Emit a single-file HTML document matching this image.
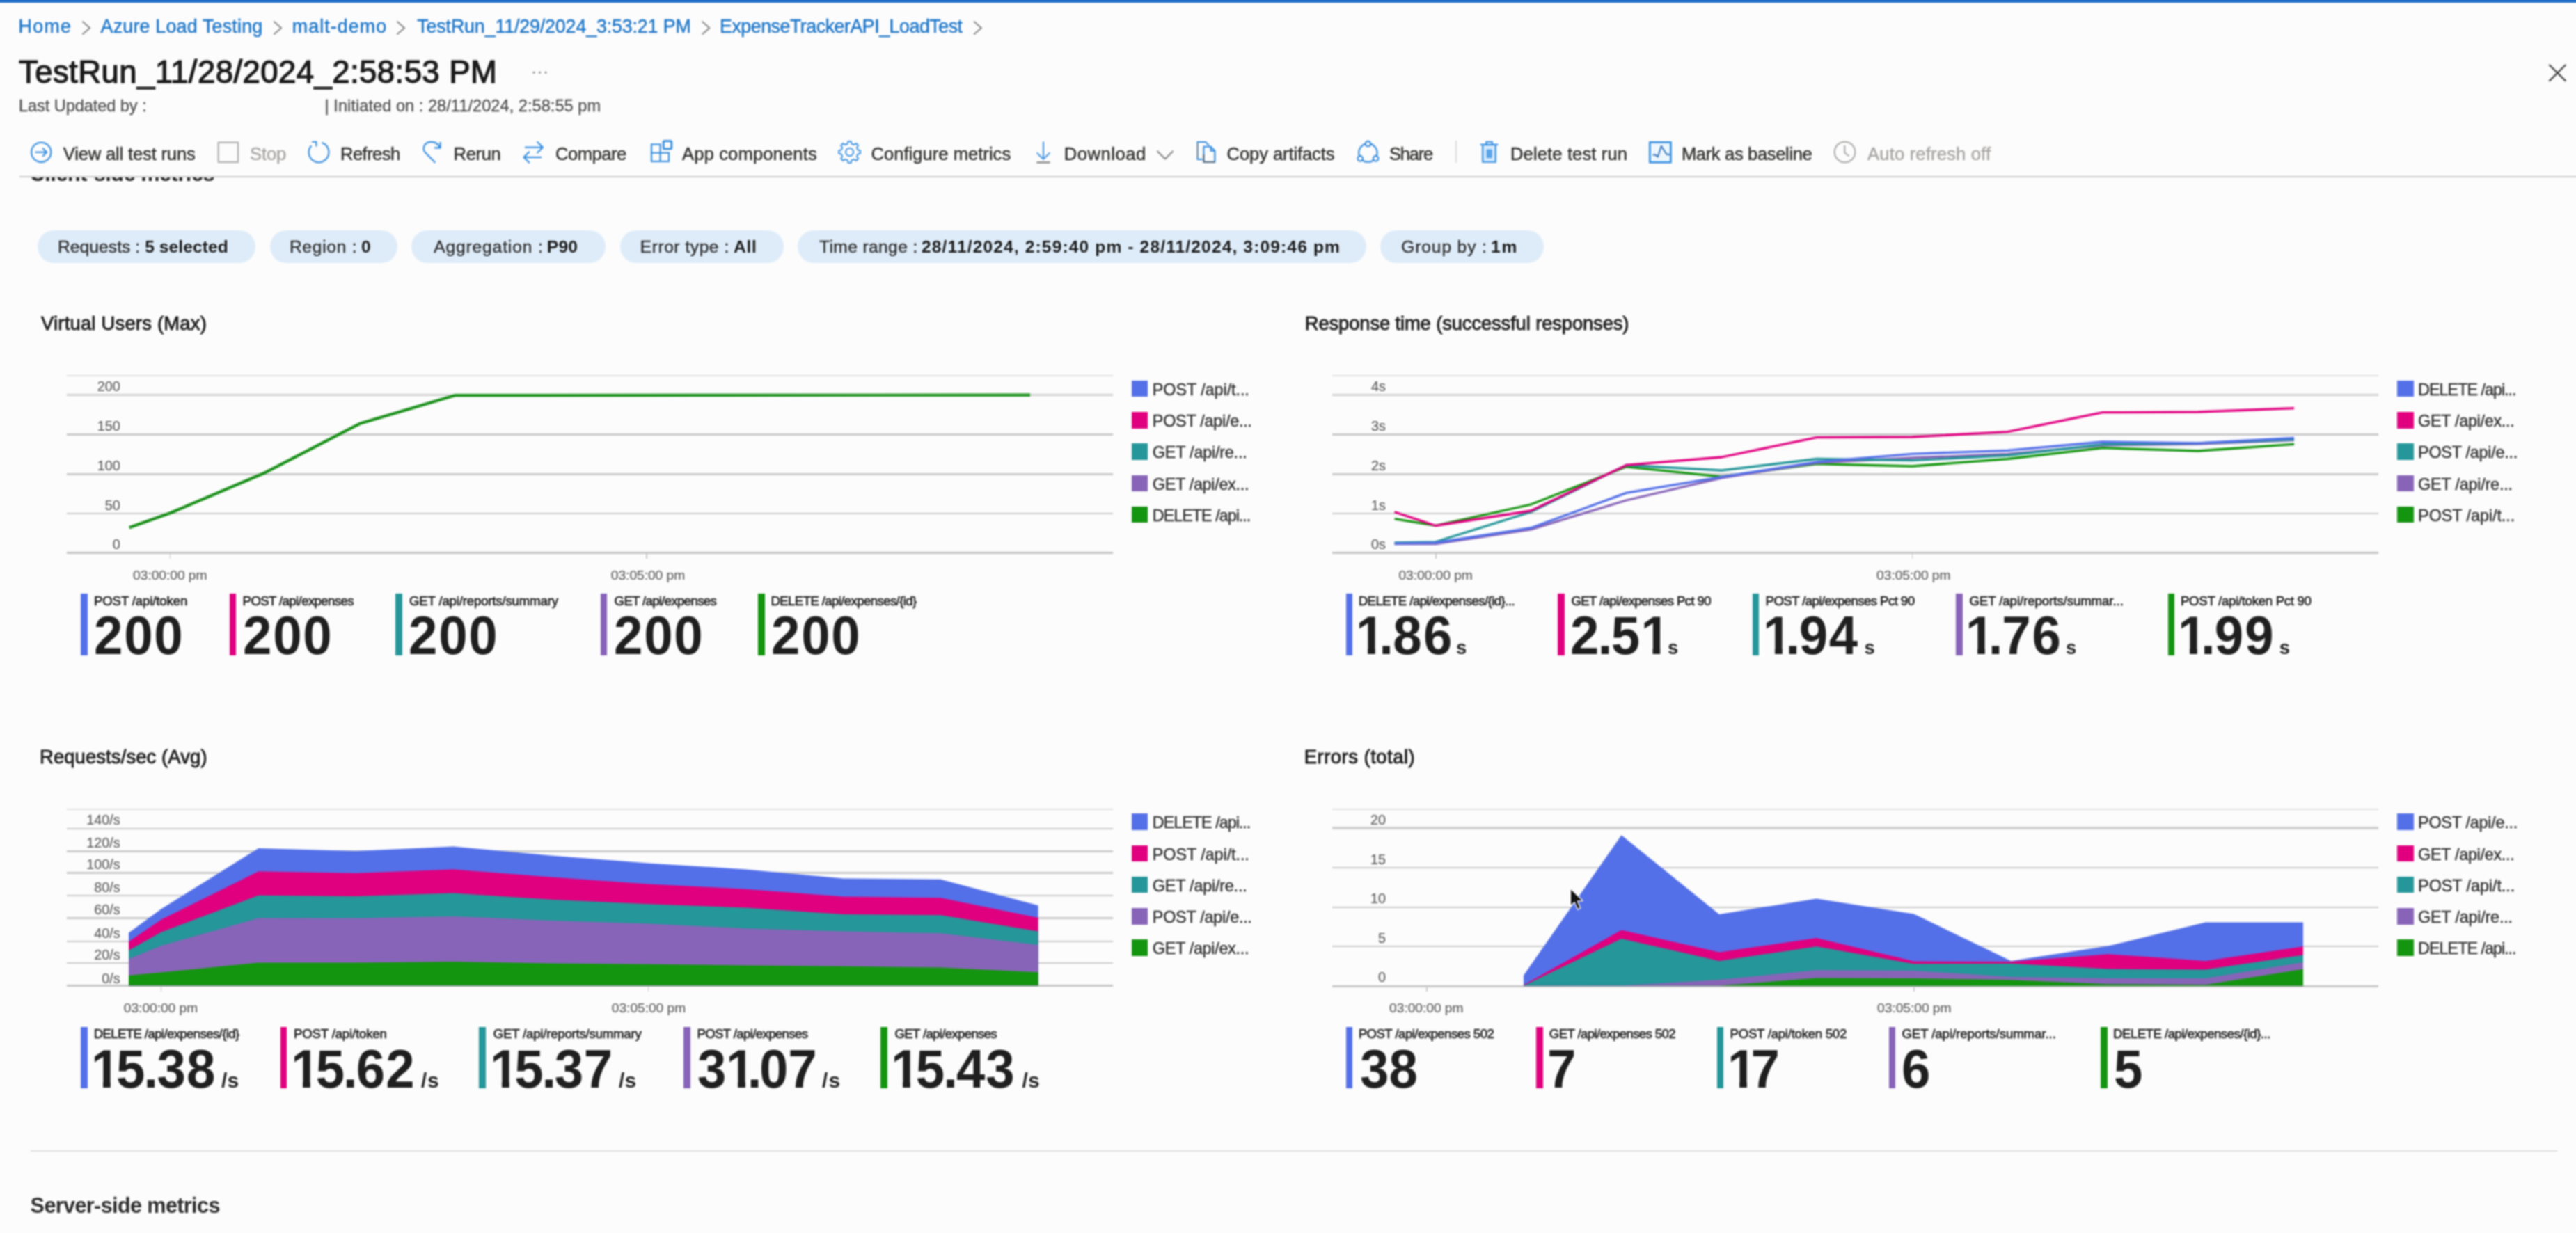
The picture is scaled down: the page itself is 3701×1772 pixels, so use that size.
<!DOCTYPE html><html><head><meta charset="utf-8"><title>TestRun - Azure Load Testing</title><style>

html,body{margin:0;padding:0;}
html{overflow:hidden;background:#fcfcfc;}
body{width:3701px;height:1772px;background:#fcfcfc;overflow:hidden;position:relative;font-family:"Liberation Sans",sans-serif;}
.r{position:absolute;}
.t{position:absolute;white-space:pre;line-height:1;font-family:"Liberation Sans",sans-serif;}
.t i{font-style:normal;}
.o{display:inline-block;margin-right:-0.1em;clip-path:polygon(0 0,100% 0,100% 0.715em,0.374em 0.715em,0.374em 100%,0.23em 100%,0.23em 0.715em,0 0.715em);}
.o.p{margin-right:-0.09em;}
svg.g{position:absolute;left:0;top:0;}
#c{position:absolute;left:0;top:0;width:3701px;height:1772px;overflow:hidden;}
#w{position:absolute;left:0;top:0;width:3701px;height:1772px;filter:blur(0.85px);}

</style></head><body>
<div id="c"><div id="w">
<div class="r" style="left:-10.0px;top:-8.0px;width:3721.0px;height:11.7px;background:#1a6cc6;"></div>
<div class="r" style="left:28.0px;top:252.9px;width:3701.0px;height:2.4px;background:#cccccc;"></div>
<div class="r" style="left:2091.0px;top:202.0px;width:1.6px;height:32.0px;background:#dcdcdc;"></div>
<div class="r" style="left:53.6px;top:331.4px;width:313.2px;height:46.5px;background:#deecf9;border-radius:23.3px"></div>
<div class="r" style="left:387.5px;top:331.4px;width:183.9px;height:46.5px;background:#deecf9;border-radius:23.3px"></div>
<div class="r" style="left:591.0px;top:331.4px;width:279.0px;height:46.5px;background:#deecf9;border-radius:23.3px"></div>
<div class="r" style="left:890.7px;top:331.4px;width:235.0px;height:46.5px;background:#deecf9;border-radius:23.3px"></div>
<div class="r" style="left:1146.0px;top:331.4px;width:816.5px;height:46.5px;background:#deecf9;border-radius:23.3px"></div>
<div class="r" style="left:1983.0px;top:331.4px;width:234.9px;height:46.5px;background:#deecf9;border-radius:23.3px"></div>
<div class="r" style="left:95.8px;top:538.7px;width:1503.0px;height:2.2px;background:#e2e2e2;"></div>
<div class="r" style="left:95.8px;top:565.5px;width:1503.0px;height:3.6px;background:#d2d2d2;"></div>
<div class="r" style="left:95.8px;top:623.3px;width:1503.0px;height:2.4px;background:#cbcbcb;"></div>
<div class="r" style="left:95.8px;top:680.4px;width:1503.0px;height:2.4px;background:#cbcbcb;"></div>
<div class="r" style="left:95.8px;top:736.7px;width:1503.0px;height:2.4px;background:#cbcbcb;"></div>
<div class="r" style="left:95.8px;top:792.8px;width:1503.0px;height:3.2px;background:#c6c6c6;"></div>
<div class="r" style="left:243.7px;top:794.0px;width:1.8px;height:8.5px;background:#c8c8c8;"></div>
<div class="r" style="left:928.4px;top:794.0px;width:1.8px;height:8.5px;background:#c8c8c8;"></div>
<div class="r" style="left:1625.5px;top:546.7px;width:23.8px;height:23.6px;background:#5470e8;"></div>
<div class="r" style="left:1625.5px;top:592.0px;width:23.8px;height:23.6px;background:#e0007f;"></div>
<div class="r" style="left:1625.5px;top:637.2px;width:23.8px;height:23.6px;background:#259699;"></div>
<div class="r" style="left:1625.5px;top:682.5px;width:23.8px;height:23.6px;background:#8764b8;"></div>
<div class="r" style="left:1625.5px;top:727.7px;width:23.8px;height:23.6px;background:#14950f;"></div>
<div class="r" style="left:116.0px;top:853.2px;width:9.6px;height:88.6px;background:#5470e8;"></div>
<div class="r" style="left:329.6px;top:853.2px;width:9.6px;height:88.6px;background:#e0007f;"></div>
<div class="r" style="left:568.0px;top:853.2px;width:9.6px;height:88.6px;background:#259699;"></div>
<div class="r" style="left:862.6px;top:853.2px;width:9.6px;height:88.6px;background:#8764b8;"></div>
<div class="r" style="left:1089.0px;top:853.2px;width:9.6px;height:88.6px;background:#14950f;"></div>
<div class="r" style="left:1914.1px;top:538.7px;width:1503.0px;height:2.2px;background:#e2e2e2;"></div>
<div class="r" style="left:1914.1px;top:565.5px;width:1503.0px;height:3.6px;background:#d2d2d2;"></div>
<div class="r" style="left:1914.1px;top:623.3px;width:1503.0px;height:2.4px;background:#cbcbcb;"></div>
<div class="r" style="left:1914.1px;top:680.4px;width:1503.0px;height:2.4px;background:#cbcbcb;"></div>
<div class="r" style="left:1914.1px;top:736.7px;width:1503.0px;height:2.4px;background:#cbcbcb;"></div>
<div class="r" style="left:1914.1px;top:792.8px;width:1503.0px;height:3.2px;background:#c6c6c6;"></div>
<div class="r" style="left:2062.0px;top:794.0px;width:1.8px;height:8.5px;background:#c8c8c8;"></div>
<div class="r" style="left:2746.7px;top:794.0px;width:1.8px;height:8.5px;background:#c8c8c8;"></div>
<div class="r" style="left:3443.8px;top:546.7px;width:23.8px;height:23.6px;background:#5470e8;"></div>
<div class="r" style="left:3443.8px;top:592.0px;width:23.8px;height:23.6px;background:#e0007f;"></div>
<div class="r" style="left:3443.8px;top:637.2px;width:23.8px;height:23.6px;background:#259699;"></div>
<div class="r" style="left:3443.8px;top:682.5px;width:23.8px;height:23.6px;background:#8764b8;"></div>
<div class="r" style="left:3443.8px;top:727.7px;width:23.8px;height:23.6px;background:#14950f;"></div>
<div class="r" style="left:1933.5px;top:853.2px;width:9.6px;height:88.6px;background:#5470e8;"></div>
<div class="r" style="left:2238.0px;top:853.2px;width:9.6px;height:88.6px;background:#e0007f;"></div>
<div class="r" style="left:2517.5px;top:853.2px;width:9.6px;height:88.6px;background:#259699;"></div>
<div class="r" style="left:2810.0px;top:853.2px;width:9.6px;height:88.6px;background:#8764b8;"></div>
<div class="r" style="left:3114.6px;top:853.2px;width:9.6px;height:88.6px;background:#14950f;"></div>
<div class="r" style="left:95.8px;top:1161.5px;width:1503.0px;height:2.2px;background:#e2e2e2;"></div>
<div class="r" style="left:95.8px;top:1189.5px;width:1503.0px;height:2.4px;background:#cbcbcb;"></div>
<div class="r" style="left:95.8px;top:1222.4px;width:1503.0px;height:2.4px;background:#cbcbcb;"></div>
<div class="r" style="left:95.8px;top:1253.4px;width:1503.0px;height:2.4px;background:#cbcbcb;"></div>
<div class="r" style="left:95.8px;top:1285.8px;width:1503.0px;height:2.4px;background:#cbcbcb;"></div>
<div class="r" style="left:95.8px;top:1318.4px;width:1503.0px;height:2.4px;background:#cbcbcb;"></div>
<div class="r" style="left:95.8px;top:1351.8px;width:1503.0px;height:2.4px;background:#cbcbcb;"></div>
<div class="r" style="left:95.8px;top:1383.1px;width:1503.0px;height:2.4px;background:#cbcbcb;"></div>
<div class="r" style="left:95.8px;top:1415.1px;width:1503.0px;height:3.2px;background:#c6c6c6;"></div>
<div class="r" style="left:230.5px;top:1416.5px;width:1.8px;height:8.5px;background:#c8c8c8;"></div>
<div class="r" style="left:930.5px;top:1416.5px;width:1.8px;height:8.5px;background:#c8c8c8;"></div>
<div class="r" style="left:1625.5px;top:1169.2px;width:23.8px;height:23.6px;background:#5470e8;"></div>
<div class="r" style="left:1625.5px;top:1214.5px;width:23.8px;height:23.6px;background:#e0007f;"></div>
<div class="r" style="left:1625.5px;top:1259.7px;width:23.8px;height:23.6px;background:#259699;"></div>
<div class="r" style="left:1625.5px;top:1305.0px;width:23.8px;height:23.6px;background:#8764b8;"></div>
<div class="r" style="left:1625.5px;top:1350.2px;width:23.8px;height:23.6px;background:#14950f;"></div>
<div class="r" style="left:116.3px;top:1475.7px;width:9.6px;height:88.6px;background:#5470e8;"></div>
<div class="r" style="left:402.9px;top:1475.7px;width:9.6px;height:88.6px;background:#e0007f;"></div>
<div class="r" style="left:688.0px;top:1475.7px;width:9.6px;height:88.6px;background:#259699;"></div>
<div class="r" style="left:982.4px;top:1475.7px;width:9.6px;height:88.6px;background:#8764b8;"></div>
<div class="r" style="left:1265.4px;top:1475.7px;width:9.6px;height:88.6px;background:#14950f;"></div>
<div class="r" style="left:1914.1px;top:1161.6px;width:1503.0px;height:2.2px;background:#e2e2e2;"></div>
<div class="r" style="left:1914.1px;top:1188.2px;width:1503.0px;height:3.6px;background:#d2d2d2;"></div>
<div class="r" style="left:1914.1px;top:1246.1px;width:1503.0px;height:2.4px;background:#cbcbcb;"></div>
<div class="r" style="left:1914.1px;top:1302.6px;width:1503.0px;height:2.4px;background:#cbcbcb;"></div>
<div class="r" style="left:1914.1px;top:1359.1px;width:1503.0px;height:2.4px;background:#cbcbcb;"></div>
<div class="r" style="left:1914.1px;top:1415.5px;width:1503.0px;height:3.2px;background:#c6c6c6;"></div>
<div class="r" style="left:2048.8px;top:1416.5px;width:1.8px;height:8.5px;background:#c8c8c8;"></div>
<div class="r" style="left:2748.8px;top:1416.5px;width:1.8px;height:8.5px;background:#c8c8c8;"></div>
<div class="r" style="left:3443.8px;top:1169.2px;width:23.8px;height:23.6px;background:#5470e8;"></div>
<div class="r" style="left:3443.8px;top:1214.5px;width:23.8px;height:23.6px;background:#e0007f;"></div>
<div class="r" style="left:3443.8px;top:1259.7px;width:23.8px;height:23.6px;background:#259699;"></div>
<div class="r" style="left:3443.8px;top:1305.0px;width:23.8px;height:23.6px;background:#8764b8;"></div>
<div class="r" style="left:3443.8px;top:1350.2px;width:23.8px;height:23.6px;background:#14950f;"></div>
<div class="r" style="left:1933.5px;top:1475.7px;width:9.6px;height:88.6px;background:#5470e8;"></div>
<div class="r" style="left:2207.1px;top:1475.7px;width:9.6px;height:88.6px;background:#e0007f;"></div>
<div class="r" style="left:2466.5px;top:1475.7px;width:9.6px;height:88.6px;background:#259699;"></div>
<div class="r" style="left:2713.7px;top:1475.7px;width:9.6px;height:88.6px;background:#8764b8;"></div>
<div class="r" style="left:3018.4px;top:1475.7px;width:9.6px;height:88.6px;background:#14950f;"></div>
<div class="r" style="left:43.6px;top:1652.6px;width:3630.0px;height:2.2px;background:#dddddd;"></div>
<svg class="g" width="3701" height="1772" viewBox="0 0 3701 1772">
<path d="M118.4 30.8 L129.0 40.2 L118.4 49.6" fill="none" stroke="#858585" stroke-width="2"/>
<path d="M393.4 30.8 L404.0 40.2 L393.4 49.6" fill="none" stroke="#858585" stroke-width="2"/>
<path d="M570.4 30.8 L581.0 40.2 L570.4 49.6" fill="none" stroke="#858585" stroke-width="2"/>
<path d="M1008.7 30.8 L1019.3 40.2 L1008.7 49.6" fill="none" stroke="#858585" stroke-width="2"/>
<path d="M1399.2 30.8 L1409.8 40.2 L1399.2 49.6" fill="none" stroke="#858585" stroke-width="2"/>
<circle cx="767" cy="104.3" r="1.5" fill="#8a8a8a"/>
<circle cx="775.5" cy="104.3" r="1.5" fill="#8a8a8a"/>
<circle cx="784" cy="104.3" r="1.5" fill="#8a8a8a"/>
<path d="M3662.4 93 L3686.4 116.6 M3686.4 93 L3662.4 116.6" stroke="#3a3a3a" stroke-width="2.2" fill="none"/>
<path d="M185.7 758.2 L244.6 737.2 L378.6 680.3 L517.9 608.4 L653.6 568.2 L1480.0 567.6" fill="none" stroke="#178f17" stroke-width="4.2" stroke-linejoin="round"/>
<path d="M2003.6 745.7 L2062.6 755.3 L2199.5 725.0 L2336.5 670.8 L2473.4 685.2 L2610.3 666.7 L2747.3 670.0 L2884.3 659.5 L3021.0 643.7 L3158.0 648.0 L3296.0 638.3" fill="none" stroke="#14950f" stroke-width="3.3" stroke-linejoin="round"/>
<path d="M2003.6 781.7 L2062.6 781.7 L2199.5 760.8 L2336.5 719.0 L2473.4 686.8 L2610.3 665.0 L2747.3 658.0 L2884.3 652.3 L3021.0 640.0 L3158.0 638.0 L3296.0 632.5" fill="none" stroke="#8764b8" stroke-width="3.3" stroke-linejoin="round"/>
<path d="M2003.6 780.0 L2062.6 778.8 L2199.5 735.7 L2336.5 668.5 L2473.4 676.0 L2610.3 659.5 L2747.3 661.7 L2884.3 654.5 L3021.0 638.7 L3158.0 636.8 L3296.0 631.5" fill="none" stroke="#259699" stroke-width="3.3" stroke-linejoin="round"/>
<path d="M2003.6 781.2 L2062.6 780.0 L2199.5 758.7 L2336.5 708.4 L2473.4 685.4 L2610.3 663.8 L2747.3 652.3 L2884.3 647.3 L3021.0 635.0 L3158.0 636.8 L3296.0 629.5" fill="none" stroke="#5470e8" stroke-width="3.3" stroke-linejoin="round"/>
<path d="M2003.6 735.8 L2062.6 755.5 L2199.5 734.0 L2336.5 668.4 L2473.4 657.0 L2610.3 628.6 L2747.3 628.0 L2884.3 620.6 L3021.0 592.7 L3158.0 592.0 L3296.0 586.6" fill="none" stroke="#e0007f" stroke-width="3.3" stroke-linejoin="round"/>
<path d="M185.0 1340.4 L231.4 1306.5 L371.4 1219.0 L511.4 1223.0 L651.4 1216.5 L791.4 1229.5 L931.4 1240.4 L1071.4 1249.4 L1211.4 1262.5 L1351.4 1263.7 L1491.6 1301.2 L1491.6 1416.3 L185.0 1416.3 Z" fill="#5470e8"/>
<path d="M185.0 1353.3 L231.4 1321.7 L371.4 1252.2 L511.4 1254.8 L651.4 1249.6 L791.4 1260.4 L931.4 1270.5 L1071.4 1277.7 L1211.4 1288.4 L1351.4 1290.2 L1491.6 1319.0 L1491.6 1416.3 L185.0 1416.3 Z" fill="#e0007f"/>
<path d="M185.0 1365.8 L231.4 1339.7 L371.4 1286.7 L511.4 1288.0 L651.4 1283.5 L791.4 1292.7 L931.4 1299.3 L1071.4 1304.4 L1211.4 1314.1 L1351.4 1315.3 L1491.6 1338.5 L1491.6 1416.3 L185.0 1416.3 Z" fill="#259699"/>
<path d="M185.0 1378.3 L231.4 1359.2 L371.4 1319.5 L511.4 1319.8 L651.4 1317.0 L791.4 1322.9 L931.4 1327.6 L1071.4 1334.2 L1211.4 1338.6 L1351.4 1341.2 L1491.6 1358.0 L1491.6 1416.3 L185.0 1416.3 Z" fill="#8764b8"/>
<path d="M185.0 1401.7 L231.4 1397.4 L371.4 1383.4 L511.4 1383.4 L651.4 1381.9 L791.4 1384.6 L931.4 1385.8 L1071.4 1387.5 L1211.4 1388.8 L1351.4 1390.6 L1491.6 1397.3 L1491.6 1416.3 L185.0 1416.3 Z" fill="#14950f"/>
<path d="M2189.0 1401.7 L2329.6 1200.2 L2470.0 1314.0 L2609.8 1291.4 L2749.7 1313.5 L2889.3 1380.9 L3028.8 1359.6 L3168.5 1325.4 L3309.0 1325.4 L3309.0 1416.8 L2189.0 1416.8 Z" fill="#5470e8"/>
<path d="M2189.0 1415.5 L2329.6 1336.6 L2470.0 1368.6 L2609.8 1347.9 L2749.7 1381.5 L2889.3 1381.9 L3028.8 1371.2 L3168.5 1381.0 L3309.0 1360.3 L3309.0 1416.8 L2189.0 1416.8 Z" fill="#e0007f"/>
<path d="M2189.0 1416.5 L2329.6 1349.0 L2470.0 1381.0 L2609.8 1360.3 L2749.7 1385.2 L2889.3 1384.8 L3028.8 1392.6 L3168.5 1393.4 L3309.0 1372.4 L3309.0 1416.8 L2189.0 1416.8 Z" fill="#259699"/>
<path d="M2189.0 1416.8 L2329.6 1416.4 L2470.0 1408.0 L2609.8 1394.2 L2749.7 1395.0 L2889.3 1404.0 L3028.8 1406.0 L3168.5 1406.0 L3309.0 1382.9 L3309.0 1416.8 L2189.0 1416.8 Z" fill="#8764b8"/>
<path d="M2189.0 1416.8 L2329.6 1416.8 L2470.0 1416.6 L2609.8 1405.5 L2749.7 1406.0 L2889.3 1408.2 L3028.8 1414.2 L3168.5 1415.2 L3309.0 1392.6 L3309.0 1416.8 L2189.0 1416.8 Z" fill="#14950f"/>
<path d="M2256.3 1276.8 L2256.3 1302 L2262 1296.8 L2266.6 1307 L2270.8 1305.2 L2266.4 1295.2 L2274 1294.6 Z" fill="#111" stroke="#fff" stroke-width="1.4" stroke-linejoin="round"/>
<g fill="none" stroke="#2f8ade" stroke-width="2.1"><circle cx="59.2" cy="218.8" r="14.1"/><path d="M50.6 218.8 H67 M61.2 212.8 L67.2 218.8 L61.2 224.8"/></g>
<rect x="313.7" y="204.7" width="28.4" height="28.2" fill="none" stroke="#a9a7a5" stroke-width="2"/>
<g fill="none" stroke="#2f8ade" stroke-width="2.1"><path d="M462.4 205.1 A14.4 14.4 0 1 1 447.3 209.2"/><path d="M448.2 203.8 H454.4 V210.4"/></g>
<g fill="none" stroke="#2f8ade" stroke-width="2.1"><path d="M625.3 233.8 L611.3 219.5 C606.5 214.5 608.5 204.5 619 203.9 C624.5 203.6 629.5 207 632.2 211.6"/><path d="M632.6 204 V212.4 H624.2"/></g>
<g fill="none" stroke="#2f8ade" stroke-width="2.1"><path d="M754 211.8 H779.4 M771.6 203.6 L779.8 211.8 L771.6 220"/><path d="M778 226 H753 M760.8 217.8 L752.6 226 L760.8 234.2"/></g>
<g fill="none" stroke="#2f8ade" stroke-width="2.1"><path d="M936 207.5 H948.6 V232 H936 Z M936 219.8 H961 V232 H948.6 M948.6 219.8 H961"/><rect x="953.2" y="202.6" width="11.6" height="11.2" rx="1.5" stroke-width="2.8"/></g>
<g fill="none" stroke="#2f8ade" stroke-width="1.8" stroke-linejoin="round"><path d="M1232.5 215.7 L1236.0 216.3 L1236.0 220.7 L1232.5 221.3 L1231.0 224.9 L1233.1 227.9 L1230.0 231.0 L1227.0 228.9 L1223.4 230.4 L1222.8 233.9 L1218.4 233.9 L1217.8 230.4 L1214.2 228.9 L1211.2 231.0 L1208.1 227.9 L1210.2 224.9 L1208.7 221.3 L1205.2 220.7 L1205.2 216.3 L1208.7 215.7 L1210.2 212.1 L1208.1 209.1 L1211.2 206.0 L1214.2 208.1 L1217.8 206.6 L1218.4 203.1 L1222.8 203.1 L1223.4 206.6 L1227.0 208.1 L1230.0 206.0 L1233.1 209.1 L1231.0 212.1 Z"/><circle cx="1220.6" cy="218.5" r="5.6"/></g>
<g fill="none" stroke="#4a97e0" stroke-width="2.1"><path d="M1499 203.4 V228.6 M1489.6 219.4 L1499 228.8 L1508.4 219.4"/></g><path d="M1489.4 233.4 H1508.6" stroke="#666" stroke-width="1.8"/>
<path d="M1662.5 217 L1674 228.5 L1685.5 217" fill="none" stroke="#777" stroke-width="1.9"/>
<g fill="none" stroke-width="2.1"><path d="M1727.5 229 H1720.6 V204 H1732 L1737 209" stroke="#2f8ade"/><path d="M1729.4 210.8 H1739.6 L1745.4 216.6 V232.8 H1729.4 Z" stroke="#2f8ade"/><path d="M1739.6 210.8 V216.6 H1745.4" stroke="#2f8ade"/><path d="M1729.4 222 V232.8 H1745.4" stroke="#555" stroke-width="1.6"/><path d="M1720.6 206 V226" stroke="#888" stroke-width="1.6"/></g>
<g fill="#fcfcfc" stroke="#2f8ade" stroke-width="2.1"><circle cx="1965.4" cy="219.6" r="13.2" fill="none"/><circle cx="1965.4" cy="206.6" r="3.7"/><circle cx="1954.2" cy="227.8" r="3.7"/><circle cx="1976.6" cy="227.8" r="3.7"/></g>
<g stroke="#2f8ade" stroke-width="2.1"><path d="M2130.2 208 H2148.8 V232.8 H2130.2 Z" fill="#d6eafc"/><rect x="2135.6" y="214.6" width="8.2" height="12.6" fill="#5aa5ea" stroke="none"/><path d="M2126.6 207.8 H2152.4 M2135.4 207.4 V203.8 H2143.8 V207.4" fill="none"/></g>
<g fill="none" stroke="#2f8ade"><rect x="2370.4" y="204.4" width="30" height="28.8" stroke-width="2.6" fill="#eef7fe"/><path d="M2374.5 222.5 H2378.5 L2381.8 225.6 L2386.8 209.8 L2394.6 222 H2399" stroke="#2d6fb5" stroke-width="1.9" stroke-linejoin="round"/></g>
<g fill="none" stroke="#a9a7a5" stroke-width="2"><circle cx="2650.5" cy="218.5" r="14.8"/><path d="M2650.3 209 V219.6 L2656.4 224.2"/></g>
</svg>
<div class="r" style="left:0;top:255px;width:600px;height:12px;overflow:hidden"><span class="t" style="left:42.60px;top:-20.80px;font-size:30.6px;font-weight:700;color:#252525;letter-spacing:-0.434px">Client-side metrics</span></div>
<span class="t" style="left:26.60px;top:25.11px;font-size:26.8px;color:#1a75c9;-webkit-text-stroke:0.45px #1a75c9;letter-spacing:1.274px;">Home</span>
<span class="t" style="left:144.60px;top:25.11px;font-size:26.8px;color:#1a75c9;-webkit-text-stroke:0.45px #1a75c9;letter-spacing:0.217px;">Azure Load Testing</span>
<span class="t" style="left:419.70px;top:25.11px;font-size:26.8px;color:#1a75c9;-webkit-text-stroke:0.45px #1a75c9;letter-spacing:1.116px;">malt-demo</span>
<span class="t" style="left:599.30px;top:25.11px;font-size:26.8px;color:#1a75c9;-webkit-text-stroke:0.45px #1a75c9;letter-spacing:-0.138px;">TestRun_11/29/2024_3:53:21 PM</span>
<span class="t" style="left:1034.00px;top:25.11px;font-size:26.8px;color:#1a75c9;-webkit-text-stroke:0.45px #1a75c9;letter-spacing:-0.477px;">ExpenseTrackerAPI_LoadTest</span>
<span class="t" style="left:27.00px;top:81.08px;font-size:45.5px;color:#1b1b1b;-webkit-text-stroke:1.25px #1b1b1b;letter-spacing:0.440px;">TestRun_11/28/2024_2:58:53 PM</span>
<span class="t" style="left:27.00px;top:140.62px;font-size:23.6px;color:#505050;-webkit-text-stroke:0.3px #505050;letter-spacing:-0.086px;">Last Updated by :</span>
<span class="t" style="left:466.60px;top:140.62px;font-size:23.6px;color:#505050;-webkit-text-stroke:0.3px #505050;letter-spacing:0.034px;">| Initiated on : 28/11/2024, 2:58:55 pm</span>
<span class="t" style="left:90.70px;top:209.43px;font-size:25.6px;color:#323130;-webkit-text-stroke:0.45px #323130;letter-spacing:-0.170px;">View all test runs</span>
<span class="t" style="left:359.00px;top:209.43px;font-size:25.6px;color:#a8a6a4;-webkit-text-stroke:0.45px #a8a6a4;letter-spacing:-0.139px;">Stop</span>
<span class="t" style="left:489.00px;top:209.43px;font-size:25.6px;color:#323130;-webkit-text-stroke:0.45px #323130;letter-spacing:-0.564px;">Refresh</span>
<span class="t" style="left:651.60px;top:209.43px;font-size:25.6px;color:#323130;-webkit-text-stroke:0.45px #323130;letter-spacing:-0.368px;">Rerun</span>
<span class="t" style="left:798.00px;top:209.43px;font-size:25.6px;color:#323130;-webkit-text-stroke:0.45px #323130;letter-spacing:-0.505px;">Compare</span>
<span class="t" style="left:980.00px;top:209.43px;font-size:25.6px;color:#323130;-webkit-text-stroke:0.45px #323130;letter-spacing:0.125px;">App components</span>
<span class="t" style="left:1251.50px;top:209.43px;font-size:25.6px;color:#323130;-webkit-text-stroke:0.45px #323130;letter-spacing:0.009px;">Configure metrics</span>
<span class="t" style="left:1528.70px;top:209.43px;font-size:25.6px;color:#323130;-webkit-text-stroke:0.45px #323130;letter-spacing:0.530px;">Download</span>
<span class="t" style="left:1762.60px;top:209.43px;font-size:25.6px;color:#323130;-webkit-text-stroke:0.45px #323130;letter-spacing:-0.113px;">Copy artifacts</span>
<span class="t" style="left:1996.00px;top:209.43px;font-size:25.6px;color:#323130;-webkit-text-stroke:0.45px #323130;letter-spacing:-1.265px;">Share</span>
<span class="t" style="left:2170.00px;top:209.43px;font-size:25.6px;color:#323130;-webkit-text-stroke:0.45px #323130;letter-spacing:0.113px;">Delete test run</span>
<span class="t" style="left:2415.90px;top:209.43px;font-size:25.6px;color:#323130;-webkit-text-stroke:0.45px #323130;letter-spacing:-0.369px;">Mark as baseline</span>
<span class="t" style="left:2683.00px;top:209.43px;font-size:25.6px;color:#a8a6a4;-webkit-text-stroke:0.45px #a8a6a4;letter-spacing:0.173px;">Auto refresh off</span>
<span class="t" style="left:83.00px;top:343.28px;font-size:24.6px;color:#303030;-webkit-text-stroke:0.4px #303030;letter-spacing:0.063px;">Requests :</span>
<span class="t" style="left:208.20px;top:343.28px;font-size:24.6px;color:#1b1b1b;font-weight:700;letter-spacing:0.075px;">5 selected</span>
<span class="t" style="left:415.90px;top:343.28px;font-size:24.6px;color:#303030;-webkit-text-stroke:0.4px #303030;letter-spacing:0.719px;">Region :</span>
<span class="t" style="left:519.00px;top:343.28px;font-size:24.6px;color:#1b1b1b;font-weight:700;">0</span>
<span class="t" style="left:623.20px;top:343.28px;font-size:24.6px;color:#303030;-webkit-text-stroke:0.4px #303030;letter-spacing:0.853px;">Aggregation :</span>
<span class="t" style="left:785.80px;top:343.28px;font-size:24.6px;color:#1b1b1b;font-weight:700;letter-spacing:0.209px;">P90</span>
<span class="t" style="left:919.80px;top:343.28px;font-size:24.6px;color:#303030;-webkit-text-stroke:0.4px #303030;letter-spacing:0.527px;">Error type :</span>
<span class="t" style="left:1054.00px;top:343.28px;font-size:24.6px;color:#1b1b1b;font-weight:700;letter-spacing:0.703px;">All</span>
<span class="t" style="left:1177.00px;top:343.28px;font-size:24.6px;color:#303030;-webkit-text-stroke:0.4px #303030;letter-spacing:0.372px;">Time range :</span>
<span class="t" style="left:1324.00px;top:343.28px;font-size:24.6px;color:#1b1b1b;font-weight:700;letter-spacing:1.114px;">28/11/2024, 2:59:40 pm - 28/11/2024, 3:09:46 pm</span>
<span class="t" style="left:2013.30px;top:343.28px;font-size:24.6px;color:#303030;-webkit-text-stroke:0.4px #303030;letter-spacing:0.856px;">Group by :</span>
<span class="t" style="left:2141.90px;top:343.28px;font-size:24.6px;color:#1b1b1b;font-weight:700;letter-spacing:2.022px;">1m</span>
<span class="t" style="left:59.00px;top:451.11px;font-size:27.4px;color:#202020;-webkit-text-stroke:0.85px #202020;letter-spacing:0.219px;">Virtual Users (Max)</span>
<span class="t" style="left:139.80px;top:545.94px;font-size:19.8px;color:#5e5e5e;-webkit-text-stroke:0.2px #5e5e5e;">200</span>
<span class="t" style="left:139.80px;top:603.14px;font-size:19.8px;color:#5e5e5e;-webkit-text-stroke:0.2px #5e5e5e;">150</span>
<span class="t" style="left:139.80px;top:660.24px;font-size:19.8px;color:#5e5e5e;-webkit-text-stroke:0.2px #5e5e5e;">100</span>
<span class="t" style="left:150.80px;top:716.54px;font-size:19.8px;color:#5e5e5e;-webkit-text-stroke:0.2px #5e5e5e;">50</span>
<span class="t" style="left:161.80px;top:772.64px;font-size:19.8px;color:#5e5e5e;-webkit-text-stroke:0.2px #5e5e5e;">0</span>
<span class="t" style="left:191.10px;top:816.85px;font-size:19.2px;color:#5e5e5e;-webkit-text-stroke:0.2px #5e5e5e;letter-spacing:-0.029px;">03:00:00 pm</span>
<span class="t" style="left:877.80px;top:816.85px;font-size:19.2px;color:#5e5e5e;-webkit-text-stroke:0.2px #5e5e5e;letter-spacing:-0.029px;">03:05:00 pm</span>
<span class="t" style="left:1655.80px;top:548.89px;font-size:23.4px;color:#303030;-webkit-text-stroke:0.4px #303030;letter-spacing:-0.069px;">POST /api/t...</span>
<span class="t" style="left:1655.80px;top:594.14px;font-size:23.4px;color:#303030;-webkit-text-stroke:0.4px #303030;letter-spacing:-0.262px;">POST /api/e...</span>
<span class="t" style="left:1655.80px;top:639.39px;font-size:23.4px;color:#303030;-webkit-text-stroke:0.4px #303030;letter-spacing:-0.215px;">GET /api/re...</span>
<span class="t" style="left:1655.80px;top:684.64px;font-size:23.4px;color:#303030;-webkit-text-stroke:0.4px #303030;letter-spacing:-0.307px;">GET /api/ex...</span>
<span class="t" style="left:1655.80px;top:729.89px;font-size:23.4px;color:#303030;-webkit-text-stroke:0.4px #303030;letter-spacing:-1.016px;">DELETE /api...</span>
<span class="t" style="left:135.00px;top:854.96px;font-size:18.6px;color:#202020;-webkit-text-stroke:0.6px #202020;letter-spacing:-0.127px;">POST /api/token</span>
<span class="t" style="left:135.10px;top:874.42px;font-size:78.3px;color:#1f1f1f;font-weight:700;letter-spacing:1.902px;transform:scaleX(0.95);transform-origin:0 0;">200</span>
<span class="t" style="left:348.60px;top:854.96px;font-size:18.6px;color:#202020;-webkit-text-stroke:0.6px #202020;letter-spacing:-0.602px;">POST /api/expenses</span>
<span class="t" style="left:348.70px;top:874.42px;font-size:78.3px;color:#1f1f1f;font-weight:700;letter-spacing:1.902px;transform:scaleX(0.95);transform-origin:0 0;">200</span>
<span class="t" style="left:588.00px;top:854.96px;font-size:18.6px;color:#202020;-webkit-text-stroke:0.6px #202020;letter-spacing:-0.162px;">GET /api/reports/summary</span>
<span class="t" style="left:587.10px;top:874.42px;font-size:78.3px;color:#1f1f1f;font-weight:700;letter-spacing:1.902px;transform:scaleX(0.95);transform-origin:0 0;">200</span>
<span class="t" style="left:882.60px;top:854.96px;font-size:18.6px;color:#202020;-webkit-text-stroke:0.6px #202020;letter-spacing:-0.664px;">GET /api/expenses</span>
<span class="t" style="left:881.70px;top:874.42px;font-size:78.3px;color:#1f1f1f;font-weight:700;letter-spacing:1.902px;transform:scaleX(0.95);transform-origin:0 0;">200</span>
<span class="t" style="left:1107.50px;top:854.96px;font-size:18.6px;color:#202020;-webkit-text-stroke:0.6px #202020;letter-spacing:-0.608px;">DELETE /api/expenses/{id}</span>
<span class="t" style="left:1108.10px;top:874.42px;font-size:78.3px;color:#1f1f1f;font-weight:700;letter-spacing:1.902px;transform:scaleX(0.95);transform-origin:0 0;">200</span>
<span class="t" style="left:1874.80px;top:451.11px;font-size:27.4px;color:#202020;-webkit-text-stroke:0.85px #202020;letter-spacing:-0.137px;">Response time (successful responses)</span>
<span class="t" style="left:1970.10px;top:545.94px;font-size:19.8px;color:#5e5e5e;-webkit-text-stroke:0.2px #5e5e5e;">4s</span>
<span class="t" style="left:1970.10px;top:603.14px;font-size:19.8px;color:#5e5e5e;-webkit-text-stroke:0.2px #5e5e5e;">3s</span>
<span class="t" style="left:1970.10px;top:660.24px;font-size:19.8px;color:#5e5e5e;-webkit-text-stroke:0.2px #5e5e5e;">2s</span>
<span class="t" style="left:1970.10px;top:716.54px;font-size:19.8px;color:#5e5e5e;-webkit-text-stroke:0.2px #5e5e5e;">1s</span>
<span class="t" style="left:1970.10px;top:772.64px;font-size:19.8px;color:#5e5e5e;-webkit-text-stroke:0.2px #5e5e5e;">0s</span>
<span class="t" style="left:2009.40px;top:816.85px;font-size:19.2px;color:#5e5e5e;-webkit-text-stroke:0.2px #5e5e5e;letter-spacing:-0.029px;">03:00:00 pm</span>
<span class="t" style="left:2696.10px;top:816.85px;font-size:19.2px;color:#5e5e5e;-webkit-text-stroke:0.2px #5e5e5e;letter-spacing:-0.029px;">03:05:00 pm</span>
<span class="t" style="left:3474.10px;top:548.89px;font-size:23.4px;color:#303030;-webkit-text-stroke:0.4px #303030;letter-spacing:-1.016px;">DELETE /api...</span>
<span class="t" style="left:3474.10px;top:594.14px;font-size:23.4px;color:#303030;-webkit-text-stroke:0.4px #303030;letter-spacing:-0.307px;">GET /api/ex...</span>
<span class="t" style="left:3474.10px;top:639.39px;font-size:23.4px;color:#303030;-webkit-text-stroke:0.4px #303030;letter-spacing:-0.262px;">POST /api/e...</span>
<span class="t" style="left:3474.10px;top:684.64px;font-size:23.4px;color:#303030;-webkit-text-stroke:0.4px #303030;letter-spacing:-0.215px;">GET /api/re...</span>
<span class="t" style="left:3474.10px;top:729.89px;font-size:23.4px;color:#303030;-webkit-text-stroke:0.4px #303030;letter-spacing:-0.069px;">POST /api/t...</span>
<span class="t" style="left:1951.70px;top:854.96px;font-size:18.6px;color:#202020;-webkit-text-stroke:0.6px #202020;letter-spacing:-0.549px;">DELETE /api/expenses/{id}...</span>
<span class="t" style="left:1947.62px;top:874.42px;font-size:78.3px;color:#1f1f1f;font-weight:700;letter-spacing:2.429px;transform:scaleX(0.95);transform-origin:0 0;"><i class="o">1</i><i style="margin:0 -3.13px">.</i>86</span>
<span class="t" style="left:2092.00px;top:917.42px;font-size:27.5px;color:#262626;font-weight:700;">s</span>
<span class="t" style="left:2257.40px;top:854.96px;font-size:18.6px;color:#202020;-webkit-text-stroke:0.6px #202020;letter-spacing:-0.629px;">GET /api/expenses Pct 90</span>
<span class="t" style="left:2255.50px;top:874.42px;font-size:78.3px;color:#1f1f1f;font-weight:700;letter-spacing:1.362px;transform:scaleX(0.95);transform-origin:0 0;">2<i style="margin:0 -3.13px">.</i>5<i class="o p">1</i></span>
<span class="t" style="left:2396.00px;top:917.42px;font-size:27.5px;color:#262626;font-weight:700;">s</span>
<span class="t" style="left:2536.60px;top:854.96px;font-size:18.6px;color:#202020;-webkit-text-stroke:0.6px #202020;letter-spacing:-0.570px;">POST /api/expenses Pct 90</span>
<span class="t" style="left:2532.52px;top:874.42px;font-size:78.3px;color:#1f1f1f;font-weight:700;letter-spacing:1.640px;transform:scaleX(0.95);transform-origin:0 0;"><i class="o">1</i><i style="margin:0 -3.13px">.</i>94</span>
<span class="t" style="left:2678.50px;top:917.42px;font-size:27.5px;color:#262626;font-weight:700;">s</span>
<span class="t" style="left:2829.40px;top:854.96px;font-size:18.6px;color:#202020;-webkit-text-stroke:0.6px #202020;letter-spacing:-0.057px;">GET /api/reports/summar...</span>
<span class="t" style="left:2824.32px;top:874.42px;font-size:78.3px;color:#1f1f1f;font-weight:700;letter-spacing:1.903px;transform:scaleX(0.95);transform-origin:0 0;"><i class="o">1</i><i style="margin:0 -3.13px">.</i>76</span>
<span class="t" style="left:2968.00px;top:917.42px;font-size:27.5px;color:#262626;font-weight:700;">s</span>
<span class="t" style="left:3133.00px;top:854.96px;font-size:18.6px;color:#202020;-webkit-text-stroke:0.6px #202020;letter-spacing:-0.288px;">POST /api/token Pct 90</span>
<span class="t" style="left:3128.92px;top:874.42px;font-size:78.3px;color:#1f1f1f;font-weight:700;letter-spacing:2.184px;transform:scaleX(0.95);transform-origin:0 0;"><i class="o">1</i><i style="margin:0 -3.13px">.</i>99</span>
<span class="t" style="left:3274.80px;top:917.42px;font-size:27.5px;color:#262626;font-weight:700;">s</span>
<span class="t" style="left:57.00px;top:1073.61px;font-size:27.4px;color:#202020;-webkit-text-stroke:0.85px #202020;letter-spacing:0.119px;">Requests/sec (Avg)</span>
<span class="t" style="left:124.30px;top:1169.34px;font-size:19.8px;color:#5e5e5e;-webkit-text-stroke:0.2px #5e5e5e;">140/s</span>
<span class="t" style="left:124.30px;top:1202.24px;font-size:19.8px;color:#5e5e5e;-webkit-text-stroke:0.2px #5e5e5e;">120/s</span>
<span class="t" style="left:124.30px;top:1233.24px;font-size:19.8px;color:#5e5e5e;-webkit-text-stroke:0.2px #5e5e5e;">100/s</span>
<span class="t" style="left:135.30px;top:1265.64px;font-size:19.8px;color:#5e5e5e;-webkit-text-stroke:0.2px #5e5e5e;">80/s</span>
<span class="t" style="left:135.30px;top:1298.24px;font-size:19.8px;color:#5e5e5e;-webkit-text-stroke:0.2px #5e5e5e;">60/s</span>
<span class="t" style="left:135.30px;top:1331.64px;font-size:19.8px;color:#5e5e5e;-webkit-text-stroke:0.2px #5e5e5e;">40/s</span>
<span class="t" style="left:135.30px;top:1362.94px;font-size:19.8px;color:#5e5e5e;-webkit-text-stroke:0.2px #5e5e5e;">20/s</span>
<span class="t" style="left:146.30px;top:1396.94px;font-size:19.8px;color:#5e5e5e;-webkit-text-stroke:0.2px #5e5e5e;">0/s</span>
<span class="t" style="left:177.80px;top:1439.35px;font-size:19.2px;color:#5e5e5e;-webkit-text-stroke:0.2px #5e5e5e;letter-spacing:-0.029px;">03:00:00 pm</span>
<span class="t" style="left:878.80px;top:1439.35px;font-size:19.2px;color:#5e5e5e;-webkit-text-stroke:0.2px #5e5e5e;letter-spacing:-0.029px;">03:05:00 pm</span>
<span class="t" style="left:1655.80px;top:1171.39px;font-size:23.4px;color:#303030;-webkit-text-stroke:0.4px #303030;letter-spacing:-1.016px;">DELETE /api...</span>
<span class="t" style="left:1655.80px;top:1216.64px;font-size:23.4px;color:#303030;-webkit-text-stroke:0.4px #303030;letter-spacing:-0.069px;">POST /api/t...</span>
<span class="t" style="left:1655.80px;top:1261.89px;font-size:23.4px;color:#303030;-webkit-text-stroke:0.4px #303030;letter-spacing:-0.215px;">GET /api/re...</span>
<span class="t" style="left:1655.80px;top:1307.14px;font-size:23.4px;color:#303030;-webkit-text-stroke:0.4px #303030;letter-spacing:-0.262px;">POST /api/e...</span>
<span class="t" style="left:1655.80px;top:1352.39px;font-size:23.4px;color:#303030;-webkit-text-stroke:0.4px #303030;letter-spacing:-0.307px;">GET /api/ex...</span>
<span class="t" style="left:134.70px;top:1477.46px;font-size:18.6px;color:#202020;-webkit-text-stroke:0.6px #202020;letter-spacing:-0.616px;">DELETE /api/expenses/{id}</span>
<span class="t" style="left:130.62px;top:1496.92px;font-size:78.3px;color:#1f1f1f;font-weight:700;letter-spacing:1.253px;transform:scaleX(0.95);transform-origin:0 0;"><i class="o p">1</i>5<i style="margin:0 -3.13px">.</i>38</span>
<span class="t" style="left:318.00px;top:1537.81px;font-size:30px;color:#262626;font-weight:700;letter-spacing:0.165px;">/s</span>
<span class="t" style="left:422.00px;top:1477.46px;font-size:18.6px;color:#202020;-webkit-text-stroke:0.6px #202020;letter-spacing:-0.163px;">POST /api/token</span>
<span class="t" style="left:417.92px;top:1496.92px;font-size:78.3px;color:#1f1f1f;font-weight:700;letter-spacing:1.056px;transform:scaleX(0.95);transform-origin:0 0;"><i class="o p">1</i>5<i style="margin:0 -3.13px">.</i>62</span>
<span class="t" style="left:605.00px;top:1537.81px;font-size:30px;color:#262626;font-weight:700;letter-spacing:0.665px;">/s</span>
<span class="t" style="left:708.80px;top:1477.46px;font-size:18.6px;color:#202020;-webkit-text-stroke:0.6px #202020;letter-spacing:-0.205px;">GET /api/reports/summary</span>
<span class="t" style="left:703.92px;top:1496.92px;font-size:78.3px;color:#1f1f1f;font-weight:700;letter-spacing:0.687px;transform:scaleX(0.95);transform-origin:0 0;"><i class="o p">1</i>5<i style="margin:0 -3.13px">.</i>37</span>
<span class="t" style="left:889.00px;top:1537.81px;font-size:30px;color:#262626;font-weight:700;letter-spacing:0.165px;">/s</span>
<span class="t" style="left:1001.50px;top:1477.46px;font-size:18.6px;color:#202020;-webkit-text-stroke:0.6px #202020;letter-spacing:-0.631px;">POST /api/expenses</span>
<span class="t" style="left:1001.55px;top:1496.92px;font-size:78.3px;color:#1f1f1f;font-weight:700;letter-spacing:-0.337px;transform:scaleX(0.95);transform-origin:0 0;">3<i class="o">1</i><i style="margin:0 -3.13px">.</i>07</span>
<span class="t" style="left:1181.00px;top:1537.81px;font-size:30px;color:#262626;font-weight:700;letter-spacing:1.165px;">/s</span>
<span class="t" style="left:1285.50px;top:1477.46px;font-size:18.6px;color:#202020;-webkit-text-stroke:0.6px #202020;letter-spacing:-0.664px;">GET /api/expenses</span>
<span class="t" style="left:1280.42px;top:1496.92px;font-size:78.3px;color:#1f1f1f;font-weight:700;letter-spacing:1.108px;transform:scaleX(0.95);transform-origin:0 0;"><i class="o p">1</i>5<i style="margin:0 -3.13px">.</i>43</span>
<span class="t" style="left:1468.60px;top:1537.81px;font-size:30px;color:#262626;font-weight:700;letter-spacing:0.065px;">/s</span>
<span class="t" style="left:1873.80px;top:1073.61px;font-size:27.4px;color:#202020;-webkit-text-stroke:0.85px #202020;letter-spacing:0.510px;">Errors (total)</span>
<span class="t" style="left:1969.10px;top:1168.64px;font-size:19.8px;color:#5e5e5e;-webkit-text-stroke:0.2px #5e5e5e;">20</span>
<span class="t" style="left:1969.10px;top:1225.94px;font-size:19.8px;color:#5e5e5e;-webkit-text-stroke:0.2px #5e5e5e;">15</span>
<span class="t" style="left:1969.10px;top:1282.44px;font-size:19.8px;color:#5e5e5e;-webkit-text-stroke:0.2px #5e5e5e;">10</span>
<span class="t" style="left:1980.10px;top:1338.94px;font-size:19.8px;color:#5e5e5e;-webkit-text-stroke:0.2px #5e5e5e;">5</span>
<span class="t" style="left:1980.10px;top:1395.34px;font-size:19.8px;color:#5e5e5e;-webkit-text-stroke:0.2px #5e5e5e;">0</span>
<span class="t" style="left:1996.10px;top:1439.35px;font-size:19.2px;color:#5e5e5e;-webkit-text-stroke:0.2px #5e5e5e;letter-spacing:-0.029px;">03:00:00 pm</span>
<span class="t" style="left:2697.10px;top:1439.35px;font-size:19.2px;color:#5e5e5e;-webkit-text-stroke:0.2px #5e5e5e;letter-spacing:-0.029px;">03:05:00 pm</span>
<span class="t" style="left:3474.10px;top:1171.39px;font-size:23.4px;color:#303030;-webkit-text-stroke:0.4px #303030;letter-spacing:-0.262px;">POST /api/e...</span>
<span class="t" style="left:3474.10px;top:1216.64px;font-size:23.4px;color:#303030;-webkit-text-stroke:0.4px #303030;letter-spacing:-0.307px;">GET /api/ex...</span>
<span class="t" style="left:3474.10px;top:1261.89px;font-size:23.4px;color:#303030;-webkit-text-stroke:0.4px #303030;letter-spacing:-0.069px;">POST /api/t...</span>
<span class="t" style="left:3474.10px;top:1307.14px;font-size:23.4px;color:#303030;-webkit-text-stroke:0.4px #303030;letter-spacing:-0.215px;">GET /api/re...</span>
<span class="t" style="left:3474.10px;top:1352.39px;font-size:23.4px;color:#303030;-webkit-text-stroke:0.4px #303030;letter-spacing:-1.016px;">DELETE /api...</span>
<span class="t" style="left:1951.70px;top:1477.46px;font-size:18.6px;color:#202020;-webkit-text-stroke:0.6px #202020;letter-spacing:-0.537px;">POST /api/expenses 502</span>
<span class="t" style="left:1954.05px;top:1496.92px;font-size:78.3px;color:#1f1f1f;font-weight:700;letter-spacing:0.087px;transform:scaleX(0.95);transform-origin:0 0;">38</span>
<span class="t" style="left:2225.80px;top:1477.46px;font-size:18.6px;color:#202020;-webkit-text-stroke:0.6px #202020;letter-spacing:-0.609px;">GET /api/expenses 502</span>
<span class="t" style="left:2222.95px;top:1496.92px;font-size:78.3px;color:#1f1f1f;font-weight:700;transform:scaleX(0.95);transform-origin:0 0;">7</span>
<span class="t" style="left:2485.60px;top:1477.46px;font-size:18.6px;color:#202020;-webkit-text-stroke:0.6px #202020;letter-spacing:-0.254px;">POST /api/token 502</span>
<span class="t" style="left:2481.52px;top:1496.92px;font-size:78.3px;color:#1f1f1f;font-weight:700;letter-spacing:-1.198px;transform:scaleX(0.95);transform-origin:0 0;"><i class="o p">1</i>7</span>
<span class="t" style="left:2732.40px;top:1477.46px;font-size:18.6px;color:#202020;-webkit-text-stroke:0.6px #202020;letter-spacing:-0.057px;">GET /api/reports/summar...</span>
<span class="t" style="left:2731.90px;top:1496.92px;font-size:78.3px;color:#1f1f1f;font-weight:700;transform:scaleX(0.95);transform-origin:0 0;">6</span>
<span class="t" style="left:3036.00px;top:1477.46px;font-size:18.6px;color:#202020;-webkit-text-stroke:0.6px #202020;letter-spacing:-0.497px;">DELETE /api/expenses/{id}...</span>
<span class="t" style="left:3037.10px;top:1496.92px;font-size:78.3px;color:#1f1f1f;font-weight:700;transform:scaleX(0.95);transform-origin:0 0;">5</span>
<span class="t" style="left:43.60px;top:1717.30px;font-size:30.6px;color:#2e2e2e;font-weight:700;letter-spacing:-0.622px;">Server-side metrics</span>
</div></div>
</body></html>
